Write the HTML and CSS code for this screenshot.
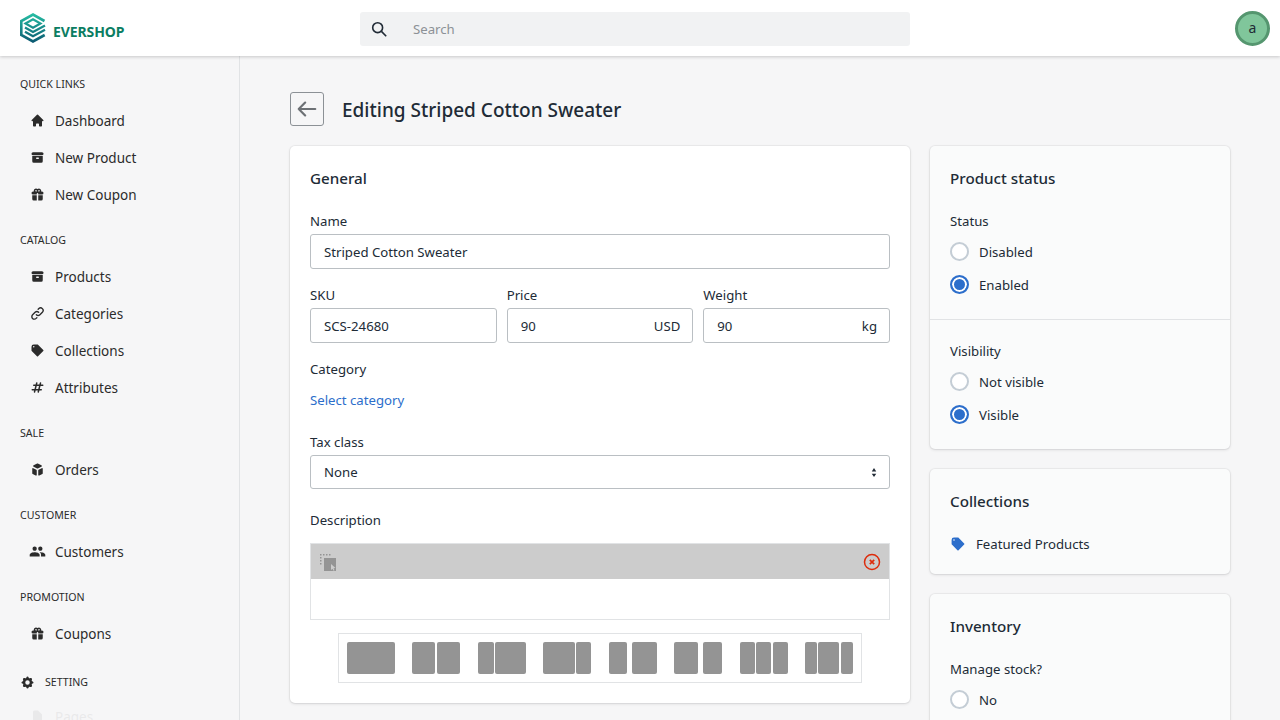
FILE: index.html
```html
<!DOCTYPE html>
<html lang="en">
<head>
    <meta charset="UTF-8">
    <meta name="viewport" content="width=device-width, initial-scale=1.0">
    <title>Editing Striped Cotton Sweater</title>
    <link rel="stylesheet" href="styles.css">
</head>
<body>
    <header class="topbar">
        <a href="#" class="logo">
            <svg viewBox="0 0 26 30" width="26" height="30" fill="none">
                <defs>
                    <linearGradient id="logoGrad" gradientUnits="userSpaceOnUse" x1="0" y1="0" x2="0" y2="30">
                        <stop offset="0" stop-color="#27c0a4"/>
                        <stop offset="1" stop-color="#0a5670"/>
                    </linearGradient>
                </defs>
                <path d="M24.500 8L13 1.500 1.300 8V22L13 28.500 24.700 22" stroke="url(#logoGrad)" stroke-width="2.600"/>
                <path d="M5.500 10.500L13 6.200 20.500 10.500 13 14.800Z" stroke="url(#logoGrad)" stroke-width="2.200"/>
                <path d="M5 14.500L13 19 25 12.500M5 18.700L13 23.300 25 16.800" stroke="url(#logoGrad)" stroke-width="2.300"/>
            </svg>
            <span>EVERSHOP</span>
        </a>
        <div class="search">
            <svg class="search-icon" viewBox="0 0 20 20" width="18" height="18" fill="none" stroke="#212b36" stroke-width="1.800"><circle cx="8.500" cy="8.500" r="5.500"/><path d="M12.700 12.700L18 18"/></svg>
            <input type="text" placeholder="Search">
        </div>
        <div class="avatar">a</div>
    </header>

    <div class="layout">
        <nav class="sidebar">
            <div class="nav-group">
                <div class="nav-title">Quick links</div>
                <a href="#" class="nav-item"><svg viewBox="0 0 20 20" fill="currentColor"><path d="M10.707 2.293a1 1 0 00-1.414 0l-7 7a1 1 0 001.414 1.414L4 10.414V17a1 1 0 001 1h2a1 1 0 001-1v-2a1 1 0 011-1h2a1 1 0 011 1v2a1 1 0 001 1h2a1 1 0 001-1v-6.586l.293.293a1 1 0 001.414-1.414l-7-7z"/></svg>Dashboard</a>
                <a href="#" class="nav-item"><svg viewBox="0 0 20 20" fill="currentColor"><path d="M4 3a2 2 0 100 4h12a2 2 0 100-4H4z"/><path fill-rule="evenodd" d="M3 8h14v7a2 2 0 01-2 2H5a2 2 0 01-2-2V8zm5 3a1 1 0 011-1h2a1 1 0 110 2H9a1 1 0 01-1-1z"/></svg>New Product</a>
                <a href="#" class="nav-item"><svg viewBox="0 0 20 20" fill="currentColor"><path fill-rule="evenodd" d="M5 5a3 3 0 015-2.236A3 3 0 0114.830 6H16a2 2 0 110 4h-5V9a1 1 0 10-2 0v1H4a2 2 0 110-4h1.170C5.060 5.687 5 5.350 5 5zm4 1V5a1 1 0 10-1 1h1zm3 0a1 1 0 10-1-1v1h1z"/><path d="M9 11H3v5a2 2 0 002 2h4v-7zM11 18h4a2 2 0 002-2v-5h-6v7z"/></svg>New Coupon</a>
            </div>
            <div class="nav-group">
                <div class="nav-title">Catalog</div>
                <a href="#" class="nav-item"><svg viewBox="0 0 20 20" fill="currentColor"><path d="M4 3a2 2 0 100 4h12a2 2 0 100-4H4z"/><path fill-rule="evenodd" d="M3 8h14v7a2 2 0 01-2 2H5a2 2 0 01-2-2V8zm5 3a1 1 0 011-1h2a1 1 0 110 2H9a1 1 0 01-1-1z"/></svg>Products</a>
                <a href="#" class="nav-item"><svg viewBox="0 0 24 24" fill="none" stroke="currentColor" stroke-width="2.200" stroke-linecap="round" stroke-linejoin="round"><path d="M13.828 10.172a4 4 0 00-5.656 0l-4 4a4 4 0 105.656 5.656l1.102-1.101m-.758-4.899a4 4 0 005.656 0l4-4a4 4 0 00-5.656-5.656l-1.100 1.100"/></svg>Categories</a>
                <a href="#" class="nav-item"><svg viewBox="0 0 20 20" fill="currentColor"><path fill-rule="evenodd" d="M17.707 9.293a1 1 0 010 1.414l-7 7a1 1 0 01-1.414 0l-7-7A.997.997 0 012 10V5a3 3 0 013-3h5c.256 0 .512.098.707.293l7 7zM5 6a1 1 0 100-2 1 1 0 000 2z"/></svg>Collections</a>
                <a href="#" class="nav-item"><svg viewBox="0 0 20 20" fill="currentColor"><path fill-rule="evenodd" d="M9.243 3.030a1 1 0 01.727 1.213L9.530 6h2.940l.560-2.243a1 1 0 111.940.486L14.530 6H17a1 1 0 110 2h-2.970l-1 4H15a1 1 0 110 2h-2.470l-.560 2.242a1 1 0 11-1.940-.485L10.470 14H7.530l-.560 2.242a1 1 0 11-1.940-.485L5.470 14H3a1 1 0 110-2h2.970l1-4H5a1 1 0 110-2h2.470l.560-2.243a1 1 0 011.213-.727zM9.030 8l-1 4h2.938l1-4H9.031z"/></svg>Attributes</a>
            </div>
            <div class="nav-group">
                <div class="nav-title">Sale</div>
                <a href="#" class="nav-item"><svg viewBox="0 0 20 20" fill="currentColor"><path d="M11 17a1 1 0 001.447.894l4-2A1 1 0 0017 15V9.236a1 1 0 00-1.447-.894l-4 2a1 1 0 00-.553.894V17zM15.211 6.276a1 1 0 000-1.788l-4.764-2.382a1 1 0 00-.894 0L4.789 4.488a1 1 0 000 1.788l4.764 2.382a1 1 0 00.894 0l4.764-2.382zM4.447 8.342A1 1 0 003 9.236V15a1 1 0 00.553.894l4 2A1 1 0 009 17v-5.764a1 1 0 00-.553-.894l-4-2z"/></svg>Orders</a>
            </div>
            <div class="nav-group">
                <div class="nav-title">Customer</div>
                <a href="#" class="nav-item"><svg class="icon-wide" viewBox="0 0 24 24" fill="currentColor"><path d="M16 11c1.660 0 2.990-1.340 2.990-3S17.660 5 16 5c-1.660 0-3 1.340-3 3s1.340 3 3 3zm-8 0c1.660 0 2.990-1.340 2.990-3S9.660 5 8 5C6.340 5 5 6.340 5 8s1.340 3 3 3zm0 2c-2.330 0-7 1.170-7 3.500V19h14v-2.500c0-2.330-4.670-3.500-7-3.500zm8 0c-.290 0-.620.020-.970.050 1.160.840 1.970 1.970 1.970 3.450V19h6v-2.500c0-2.330-4.670-3.500-7-3.500z"/></svg>Customers</a>
            </div>
            <div class="nav-group">
                <div class="nav-title">Promotion</div>
                <a href="#" class="nav-item"><svg viewBox="0 0 20 20" fill="currentColor"><path fill-rule="evenodd" d="M5 5a3 3 0 015-2.236A3 3 0 0114.830 6H16a2 2 0 110 4h-5V9a1 1 0 10-2 0v1H4a2 2 0 110-4h1.170C5.060 5.687 5 5.350 5 5zm4 1V5a1 1 0 10-1 1h1zm3 0a1 1 0 10-1-1v1h1z"/><path d="M9 11H3v5a2 2 0 002 2h4v-7zM11 18h4a2 2 0 002-2v-5h-6v7z"/></svg>Coupons</a>
            </div>
            <div class="nav-group setting">
                <div class="nav-title"><svg viewBox="0 0 20 20" fill="currentColor"><path fill-rule="evenodd" d="M11.490 3.170c-.380-1.560-2.600-1.560-2.980 0a1.532 1.532 0 01-2.286.948c-1.372-.836-2.942.734-2.106 2.106.540.886.061 2.042-.947 2.287-1.561.379-1.561 2.600 0 2.978a1.532 1.532 0 01.947 2.287c-.836 1.372.734 2.942 2.106 2.106a1.532 1.532 0 012.287.947c.379 1.561 2.600 1.561 2.978 0a1.533 1.533 0 012.287-.947c1.372.836 2.942-.734 2.106-2.106a1.533 1.533 0 01.947-2.287c1.561-.379 1.561-2.600 0-2.978a1.532 1.532 0 01-.947-2.287c.836-1.372-.734-2.942-2.106-2.106a1.532 1.532 0 01-2.287-.947zM10 13a3 3 0 100-6 3 3 0 000 6z"/></svg>Setting</div>
                <a href="#" class="nav-item faded"><svg viewBox="0 0 20 20" fill="currentColor"><path d="M4 4a2 2 0 012-2h4.586L16 7.414V16a2 2 0 01-2 2H6a2 2 0 01-2-2V4z"/></svg>Pages</a>
            </div>
        </nav>

        <main class="content">
            <div class="page-heading">
                <a href="#" class="back-btn">
                    <svg viewBox="0 0 24 24" width="22" height="22" fill="none" stroke="#6d7175" stroke-width="2.400" stroke-linecap="round" stroke-linejoin="round"><path d="M10 19l-7-7 7-7M3 12h18"/></svg>
                </a>
                <h1>Editing Striped Cotton Sweater</h1>
            </div>

            <div class="columns">
                <section class="card main-card">
                    <h2>General</h2>
                    <div class="field">
                        <label>Name</label>
                        <div class="input-box"><input type="text" value="Striped Cotton Sweater"></div>
                    </div>
                    <div class="field-row">
                        <div class="field">
                            <label>SKU</label>
                            <div class="input-box"><input type="text" value="SCS-24680"></div>
                        </div>
                        <div class="field">
                            <label>Price</label>
                            <div class="input-box"><input type="text" value="90"><span class="suffix">USD</span></div>
                        </div>
                        <div class="field">
                            <label>Weight</label>
                            <div class="input-box"><input type="text" value="90"><span class="suffix">kg</span></div>
                        </div>
                    </div>
                    <div class="field">
                        <label>Category</label>
                        <a href="#" class="select-link">Select category</a>
                    </div>
                    <div class="field">
                        <label>Tax class</label>
                        <div class="input-box select-box">
                            <select><option>None</option></select>
                            <svg viewBox="0 0 8 12" width="6" height="9" fill="#212b36"><path d="M4 0l3 4.500H1zM4 12L1 7.500h6z"/></svg>
                        </div>
                    </div>
                    <div class="field description">
                        <label>Description</label>
                        <div class="editor">
                            <div class="editor-bar">
                                <svg viewBox="0 0 18 18" width="18" height="18">
                                    <path d="M1 1h1.500v1.500H1zM4 1h1.500v1.500H4zM7 1h1.500v1.500H7zM10 1h1.500v1.500H10zM1 4h1.500v1.500H1zM1 7h1.500v1.500H1zM1 10h1.500v1.500H1z" fill="#949494"/>
                                    <path d="M5 5h12v13H5z" fill="#949494"/>
                                    <path d="M12 11l4.500 4-2 .3 1 2-1 .5-1-2-1.500 1.200z" fill="#ccc"/>
                                </svg>
                                <svg viewBox="0 0 18 18" width="18" height="18" fill="none" stroke="#dd2c0c"><circle cx="9" cy="9" r="7.500" stroke-width="1.500"/><path d="M6.800 6.800l4.400 4.400M11.200 6.800l-4.400 4.400" stroke-width="1.700"/></svg>
                            </div>
                        </div>
                        <div class="layout-picker">
                            <div class="layout-opt"><i class="w48"></i></div>
                            <div class="layout-opt"><i class="w23"></i><i class="w23"></i></div>
                            <div class="layout-opt"><i class="w16"></i><i class="w31"></i></div>
                            <div class="layout-opt"><i class="w32"></i><i class="w15"></i></div>
                            <div class="layout-opt"><i class="w18"></i><i class="w25"></i></div>
                            <div class="layout-opt"><i class="w24"></i><i class="w19"></i></div>
                            <div class="layout-opt"><i class="w15"></i><i class="w15"></i><i class="w15"></i></div>
                            <div class="layout-opt"><i class="w12"></i><i class="w21"></i><i class="w12"></i></div>
                        </div>
                    </div>
                </section>

                <aside class="side-col">
                    <section class="card side-card">
                        <div class="card-section">
                            <h2>Product status</h2>
                            <div class="radio-label">Status</div>
                            <label class="radio"><input type="radio" name="status">Disabled</label>
                            <label class="radio"><input type="radio" name="status" checked>Enabled</label>
                        </div>
                        <div class="card-section divided">
                            <div class="radio-label">Visibility</div>
                            <label class="radio"><input type="radio" name="visibility">Not visible</label>
                            <label class="radio"><input type="radio" name="visibility" checked>Visible</label>
                        </div>
                    </section>
                    <section class="card side-card">
                        <div class="card-section plain">
                            <h2>Collections</h2>
                            <a href="#" class="collection">
                                <svg viewBox="0 0 20 20" width="16" height="16" fill="#2c6ecb"><path fill-rule="evenodd" d="M17.707 9.293a1 1 0 010 1.414l-7 7a1 1 0 01-1.414 0l-7-7A.997.997 0 012 10V5a3 3 0 013-3h5c.256 0 .512.098.707.293l7 7zM5 6a1 1 0 100-2 1 1 0 000 2z"/></svg>
                                Featured Products
                            </a>
                        </div>
                    </section>
                    <section class="card side-card">
                        <div class="card-section">
                            <h2>Inventory</h2>
                            <div class="radio-label">Manage stock?</div>
                            <label class="radio"><input type="radio" name="stock">No</label>
                        </div>
                    </section>
                </aside>
            </div>
        </main>
    </div>
</body>
</html>
```

FILE: styles.css
```css
* {
    box-sizing: border-box;
}

html, body {
    height: 720px;
    overflow: hidden;
}

body {
    margin: 0;
    padding: 0;
    font-family: "Noto Sans", "Open Sans", sans-serif;
    font-size: 13.2px;
    color: #212b36;
    background-color: #f6f6f7;
}

a {
    text-decoration: none;
    color: inherit;
}

.topbar {
    position: relative;
    z-index: 2;
    display: flex;
    align-items: center;
    height: 56px;
    padding: 0 10px 0 20px;
    background-color: white;
    box-shadow: 0 1px 3px rgba(63, 63, 68, 0.25);
}

.logo {
    display: flex;
    align-items: center;
    width: 340px;
    font-weight: 700;
    font-size: 14px;
    color: #0b7d62;
}

.logo span {
    margin: 6px 0 0 7px;
    letter-spacing: -0.1px;
}

.search {
    display: flex;
    align-items: center;
    width: 550px;
    height: 34px;
    margin-top: 2px;
    padding-left: 10px;
    background-color: #f1f2f3;
    border-radius: 3px;
}

.search input {
    flex: 1;
    margin-left: 25px;
    padding: 0;
    border: none;
    outline: none;
    background: none;
    font: inherit;
}

.search input::placeholder {
    color: #8c9196;
    opacity: 1;
}

.avatar {
    width: 35px;
    height: 35px;
    margin-left: auto;
    border: 3px solid #55966f;
    border-radius: 50%;
    background-color: #80c69b;
    text-align: center;
    line-height: 28px;
    font-size: 14px;
}

.layout {
    display: flex;
    height: 664px;
}

.sidebar {
    flex: none;
    width: 240px;
    height: 664px;
    overflow: hidden;
    padding: 9px 0 0 20px;
    border-right: 1px solid #e1e3e5;
}

.nav-group {
    margin-bottom: 8px;
}

.nav-title {
    height: 37px;
    line-height: 39px;
    font-size: 10.6px;
    text-transform: uppercase;
    color: #2b2b2b;
}

.nav-item {
    display: flex;
    align-items: center;
    height: 37px;
    padding-left: 10px;
    color: #2b2b2b;
    font-size: 13.5px;
}

.nav-item svg {
    width: 15px;
    height: 15px;
    margin-right: 10px;
}

.nav-item svg.icon-wide {
    width: 17px;
    height: 17px;
    margin: 0 9px 0 -1px;
}

.setting {
    margin-top: 12px;
}

.setting .nav-title {
    display: flex;
    align-items: center;
}

.setting .nav-title svg {
    width: 15px;
    height: 15px;
    margin-right: 10px;
}

.nav-item.faded {
    margin-top: -3px;
    opacity: 0.06;
}

.content {
    flex: 1;
    padding: 36px 50px 0;
}

.page-heading {
    display: flex;
    align-items: center;
    height: 34px;
    margin-bottom: 20px;
}

.back-btn {
    display: flex;
    align-items: center;
    justify-content: center;
    width: 34px;
    height: 34px;
    margin-right: 18px;
    border: 1px solid #8c9196;
    border-radius: 3px;
}

h1 {
    margin: 0;
    padding-top: 2px;
    font-size: 19px;
    font-weight: 500;
}

h2 {
    margin: 0 0 20px;
    height: 24px;
    line-height: 24px;
    font-size: 15.2px;
    font-weight: 500;
}

.columns {
    display: grid;
    grid-template-columns: 620px 300px;
    gap: 20px;
    align-items: start;
}

.card {
    border-radius: 5px;
    box-shadow: 0 0 0 1px rgba(63, 63, 68, 0.05), 0 1px 3px rgba(63, 63, 68, 0.15);
}

.main-card {
    padding: 20px;
    background-color: white;
}

.field {
    margin-bottom: 15px;
}

.field label {
    display: block;
    height: 21px;
    line-height: 23px;
    margin-bottom: 3px;
}

.field-row {
    display: grid;
    grid-template-columns: repeat(3, minmax(0, 1fr));
    gap: 10px;
}

.input-box {
    display: flex;
    align-items: center;
    height: 35px;
    padding: 0 12px 0 13px;
    background-color: white;
    border: 1px solid #babfc3;
    border-radius: 3px;
}

.input-box input,
.input-box select {
    flex: 1;
    min-width: 0;
    padding: 0;
    border: none;
    outline: none;
    background: none;
    font: inherit;
    color: inherit;
    appearance: none;
}

.suffix {
    margin-left: 8px;
}

.select-link {
    display: block;
    height: 34px;
    padding-top: 8px;
    line-height: 21px;
    color: #2c6ecb;
}

.select-box {
    height: 34px;
}

.description {
    margin: 20px 0 0;
}

.description label {
    margin-bottom: 13px;
}

.editor {
    height: 77px;
    border: 1px solid #e1e3e5;
}

.editor-bar {
    display: flex;
    align-items: center;
    justify-content: space-between;
    height: 35px;
    padding: 0 8px;
    background-color: #ccc;
}

.layout-picker {
    display: flex;
    justify-content: space-between;
    width: 524px;
    height: 50px;
    margin: 13px auto 0;
    padding: 8px;
    border: 1px solid #e1e3e5;
}

.layout-opt {
    display: flex;
    justify-content: space-between;
    width: 48px;
    height: 32px;
}

.layout-opt i {
    display: block;
    height: 32px;
    background-color: #949494;
    border-radius: 2px;
}

.w48 { width: 48px; }
.w32 { width: 32px; }
.w31 { width: 31px; }
.w25 { width: 25px; }
.w24 { width: 24px; }
.w23 { width: 23px; }
.w21 { width: 21px; }
.w19 { width: 19px; }
.w18 { width: 18px; }
.w16 { width: 16px; }
.w15 { width: 15px; }
.w12 { width: 12px; }

.side-col {
    display: flex;
    flex-direction: column;
    gap: 20px;
}

.side-card {
    background-color: #fafbfb;
}

.card-section {
    padding: 20px 20px 18px;
}

.card-section.plain {
    padding-bottom: 20px;
}

.card-section.divided {
    padding-top: 20px;
    border-top: 1px solid #e1e3e5;
}

.radio-label {
    height: 21px;
    line-height: 23px;
    margin-bottom: 4px;
}

.radio {
    display: flex;
    align-items: center;
    height: 33px;
}

.radio input {
    appearance: none;
    flex: none;
    width: 19px;
    height: 19px;
    margin: 0 10px 0 0;
    border: 2px solid #c4cdd5;
    border-radius: 50%;
    background-color: white;
}

.radio input:checked {
    border-color: #2c6ecb;
    background-color: #2c6ecb;
    box-shadow: inset 0 0 0 2px white;
}

.collection {
    display: flex;
    align-items: center;
    height: 21px;
}

.collection svg {
    margin-right: 10px;
}
```
